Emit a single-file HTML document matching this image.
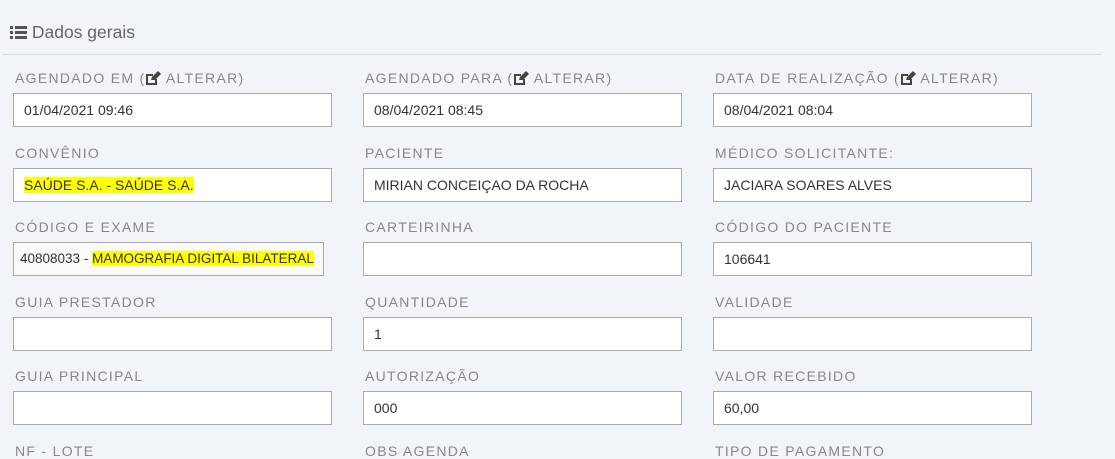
<!DOCTYPE html><html><head><style>
body{margin:0;width:1115px;height:451px;background:#f1f4f9;font-family:"Liberation Sans",sans-serif;position:relative;overflow:hidden}
.h{position:absolute;left:10px;top:22px;font-size:17.5px;color:#666}
.line{position:absolute;left:3px;top:54px;width:1099px;height:1px;background:#d9dde3}
.l{position:absolute;font-size:14px;letter-spacing:1.3px;color:#888;white-space:nowrap}
.i{position:absolute;border:1px solid #aaa;background:#fff;font-size:14px;color:#333;line-height:32px;padding-left:10px;box-sizing:border-box;width:319px;height:34px;white-space:nowrap}
.y{background:#ff0;}
</style></head><body>
<div class="h"><svg width="17" height="14" viewBox="0 0 17 14" style="vertical-align:-1px"><rect x="0" y="1" width="3" height="3" fill="#555"/><rect x="5" y="1" width="12" height="3" fill="#555"/><rect x="0" y="6" width="3" height="3" fill="#555"/><rect x="5" y="6" width="12" height="3" fill="#555"/><rect x="0" y="11" width="3" height="3" fill="#555"/><rect x="5" y="11" width="12" height="3" fill="#555"/></svg> Dados gerais</div>
<div class="line"></div>
<script>
var E='<svg width="16" height="14" viewBox="0 0 16 14" style="vertical-align:-2px"><path d="M1 3h7v2H3v7h7V8h2v6H1z" fill="#444"/><path d="M6 9l1-3 6-6 3 3-6 6z" fill="#444"/></svg>';
var rows=[
[["AGENDADO EM ("+E+" ALTERAR)","01/04/2021 09:46"],["AGENDADO PARA ("+E+" ALTERAR)","08/04/2021 08:45"],["DATA DE REALIZAÇÃO ("+E+" ALTERAR)","08/04/2021 08:04"]],
[["CONVÊNIO",'<span class="y">SAÚDE S.A. - SAÚDE S.A.</span>'],["PACIENTE","MIRIAN CONCEIÇAO DA ROCHA"],["MÉDICO SOLICITANTE:","JACIARA SOARES ALVES"]],
[["CÓDIGO E EXAME",'40808033 - <span class="y">MAMOGRAFIA DIGITAL BILATERAL</span>'],["CARTEIRINHA",""],["CÓDIGO DO PACIENTE","106641"]],
[["GUIA PRESTADOR",""],["QUANTIDADE","1"],["VALIDADE",""]],
[["GUIA PRINCIPAL",""],["AUTORIZAÇÃO","000"],["VALOR RECEBIDO","60,00"]],
[["NF - LOTE",null],["OBS AGENDA",null],["TIPO DE PAGAMENTO",null]]];
var xs=[13,363,713],h='';
rows.forEach(function(r,ri){var ly=70+ri*74.5,iy=93+ri*74.5;r.forEach(function(c,ci){
h+='<div class="l" style="left:'+(xs[ci]+2)+'px;top:'+ly+'px">'+c[0]+'</div>';
if(c[1]!==null){var st='left:'+xs[ci]+'px;top:'+iy+'px;';if(ri==2&&ci==0)st+='width:311px;background:#fafafa;padding-left:6px;font-size:13.5px;';
h+='<div class="i" style="'+st+'">'+c[1]+'</div>';}});});
document.write(h);
</script>
</body></html>
